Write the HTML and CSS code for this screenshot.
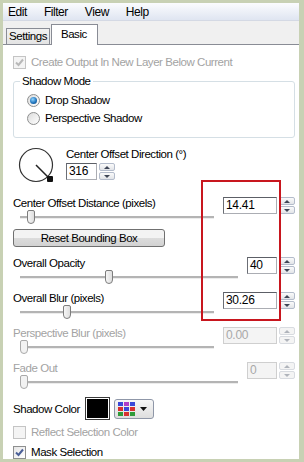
FILE: index.html
```html
<!DOCTYPE html>
<html lang="en">
<head>
    <meta charset="UTF-8">
    <meta name="viewport" content="width=device-width, initial-scale=1.0">
    <title>Drop Shadow - Basic</title>

    <link rel="stylesheet" href="styles.css">

</head>
<body>

    <div class="janela">
        <div class="menu">
            <span>Edit</span><span>Filter</span><span>View</span><span>Help</span>
        </div>

        <div class="abas">
            <div class="aba">Settings</div>
            <div class="aba ativa">Basic</div>
        </div>

        <div class="painel">
            <div class="linha off">
                <span class="chk"><svg viewBox="0 0 11 11"><path d="M2 5.5 L4.5 8 L9 2.5" /></svg></span>
                Create Output In New Layer Below Current
            </div>

            <fieldset class="grupo">
                <legend>Shadow Mode</legend>
                <div class="linha"><span class="radio sel"></span>Drop Shadow</div>
                <div class="linha"><span class="radio"></span>Perspective Shadow</div>
            </fieldset>

            <div class="direcao">
                <svg class="dial" viewBox="0 0 36 36">
                    <circle cx="18" cy="18" r="16.5" />
                    <line x1="18" y1="18" x2="31" y2="31" />
                    <rect x="29" y="29" width="6" height="6" rx="1" />
                </svg>
                <div>
                    <div class="rotulo">Center Offset Direction (°)</div>
                    <div class="spin medio">
                        <span class="campo">316</span>
                        <span class="setas"><i class="up"></i><i class="down"></i></span>
                    </div>
                </div>
            </div>

            <div class="param primeiro">
                <div class="rotulo">Center Offset Distance (pixels)</div>
                <div class="slider"><span class="pino" style="left:7px"></span></div>
                <div class="spin largo">
                    <span class="campo">14.41</span>
                    <span class="setas"><i class="up"></i><i class="down"></i></span>
                </div>
            </div>

            <button class="botao">Reset Bounding Box</button>

            <div class="param opacidade">
                <div class="rotulo">Overall Opacity</div>
                <div class="slider"><span class="pino" style="left:85px"></span></div>
                <div class="spin">
                    <span class="campo">40</span>
                    <span class="setas"><i class="up"></i><i class="down"></i></span>
                </div>
            </div>

            <div class="param">
                <div class="rotulo">Overall Blur (pixels)</div>
                <div class="slider"><span class="pino" style="left:43px"></span></div>
                <div class="spin largo">
                    <span class="campo">30.26</span>
                    <span class="setas"><i class="up"></i><i class="down"></i></span>
                </div>
            </div>

            <div class="param off">
                <div class="rotulo">Perspective Blur (pixels)</div>
                <div class="slider"><span class="pino" style="left:0px"></span></div>
                <div class="spin largo">
                    <span class="campo">0.00</span>
                    <span class="setas"><i class="up"></i><i class="down"></i></span>
                </div>
            </div>

            <div class="param off">
                <div class="rotulo">Fade Out</div>
                <div class="slider"><span class="pino" style="left:0px"></span></div>
                <div class="spin">
                    <span class="campo">0</span>
                    <span class="setas"><i class="up"></i><i class="down"></i></span>
                </div>
            </div>

            <div class="cor">
                <span class="cor-nome">Shadow Color</span>
                <span class="amostra"></span>
                <span class="paleta">
                    <svg class="grade" viewBox="0 0 17 14">
                        <rect x="0" y="0" width="5" height="4" fill="#3a48d8" />
                        <rect x="6" y="0" width="5" height="4" fill="#b03cc8" />
                        <rect x="12" y="0" width="5" height="4" fill="#3a48d8" />
                        <rect x="0" y="5" width="5" height="4" fill="#d83030" />
                        <rect x="6" y="5" width="5" height="4" fill="#3a48d8" />
                        <rect x="12" y="5" width="5" height="4" fill="#d83030" />
                        <rect x="0" y="10" width="5" height="4" fill="#2f9a3a" />
                        <rect x="6" y="10" width="5" height="4" fill="#d83030" />
                        <rect x="12" y="10" width="5" height="4" fill="#2f9a3a" />
                    </svg>
                    <svg class="tri" viewBox="0 0 7 4"><path d="M0 0 H7 L3.5 4 Z" /></svg>
                </span>
            </div>

            <div class="linha off reflexo">
                <span class="chk"></span>
                Reflect Selection Color
            </div>

            <div class="linha mascara">
                <span class="chk"><svg viewBox="0 0 11 11"><path d="M2 5.5 L4.5 8 L9 2.5" /></svg></span>
                Mask Selection
            </div>
        </div>
    </div>

    <div class="destaque"></div>

</body>
</html>
```

FILE: styles.css
```css
@charset "utf-8";

*{
    box-sizing: border-box;
}
body{
    margin: 0;
    background-color: #c8d1b4;
    font: normal 11.5px "Liberation Sans", Arial, sans-serif;
    letter-spacing: -0.45px;
    color: #000;
    overflow: hidden;
}
.janela{
    margin: 3px 5px 3px 3px;
    height: 456px;
    background: #fff;
    display: flex;
    flex-direction: column;
    overflow: hidden;
}

/* menu */
.menu{
    height: 18px;
    display: flex;
    align-items: center;
    gap: 17px;
    padding-left: 5px;
    font-size: 12px;
    background: linear-gradient(#fbfcfe, #dfe5f1);
    border-bottom: 1px solid #d4d9e4;
}

/* abas */
.abas{
    height: 24px;
    display: flex;
    align-items: flex-end;
    padding-left: 3px;
    background: #f0f0f0;
    border-bottom: 1px solid #898c95;
}
.aba{
    height: 16px;
    padding: 0 2px;
    line-height: 15px;
    border: 1px solid #898c95;
    border-bottom: none;
    background: linear-gradient(#f2f2f2, #e3e3e3);
}
.aba.ativa{
    height: 21px;
    width: 47px;
    margin-bottom: -1px;
    margin-left: 1px;
    padding-left: 9px;
    line-height: 18px;
    background: #fff;
}

.painel{
    flex: 1;
    padding: 0 4px 0 10px;
}
.linha{
    height: 14px;
    display: flex;
    align-items: center;
    gap: 5px;
    white-space: nowrap;
}
.off{
    color: #a3a3a3;
}
.painel > .linha.off:first-child{
    margin-top: 10px;
}

/* checkbox e radio */
.chk{
    width: 13px;
    height: 13px;
    border: 1px solid #8e8f8f;
    background: linear-gradient(135deg, #e6e6e6, #fff);
    display: inline-flex;
    align-items: center;
    justify-content: center;
}
.chk svg{
    width: 11px;
    height: 11px;
}
.chk path{
    fill: none;
    stroke: #4a5f97;
    stroke-width: 2;
}
.off .chk{
    border-color: #c4c4c4;
    background: #f4f4f4;
}
.off .chk path{
    stroke: #b8b8b8;
}
.radio{
    width: 13px;
    height: 13px;
    border-radius: 50%;
    border: 1px solid #8e8f8f;
    background: linear-gradient(135deg, #dcdcdc, #fff);
    position: relative;
}
.radio.sel::after{
    content: "";
    position: absolute;
    left: 2px;
    top: 2px;
    width: 7px;
    height: 7px;
    border-radius: 50%;
    background: radial-gradient(circle at 40% 35%, #8fd4ff, #1b6fb8 60%, #0e3f72);
}

/* grupo */
.grupo{
    margin: 5px 0 0 0;
    padding: 5px 6px 12px 13px;
    border: 1px solid #d5dfe5;
    border-radius: 3px;
}
.grupo legend{
    padding: 0 2px;
    margin-left: -7px;
    line-height: 14px;
}
.grupo .linha + .linha{
    margin-top: 4px;
}

/* direcao */
.direcao{
    margin-top: 9px;
    display: flex;
    gap: 12px;
}
.dial{
    width: 36px;
    height: 36px;
    margin-left: 5px;
}
.dial circle{
    fill: none;
    stroke: #333;
    stroke-width: 1.2;
}
.dial line{
    stroke: #222;
    stroke-width: 1.5;
}
.dial rect{
    fill: #111;
}
.rotulo{
    height: 14px;
    line-height: 14px;
    white-space: nowrap;
}
.direcao .spin{
    margin-top: 2px;
}

/* spin */
.spin{
    display: flex;
    gap: 2px;
    height: 17px;
}
.campo{
    width: 30px;
    height: 17px;
    padding-left: 2px;
    line-height: 15px;
    font-size: 12px;
    letter-spacing: -0.3px;
    border: 1px solid #abadb3;
    border-top-color: #5c5f66;
    border-left-color: #6b6e75;
    background: #fff;
    color: #000;
}
.medio .campo{
    width: 31px;
}
.largo .campo{
    width: 54px;
}
.setas{
    width: 16px;
    display: flex;
    flex-direction: column;
    gap: 1px;
}
.setas i{
    flex: 1;
    border: 1px solid #b4bccb;
    border-radius: 2px;
    background: linear-gradient(#fbfbfb, #e2e4e8);
    display: flex;
    align-items: center;
    justify-content: center;
}
.setas i::after{
    content: "";
    border-left: 3px solid transparent;
    border-right: 3px solid transparent;
}
.setas .up::after{
    border-bottom: 3px solid #3f4656;
}
.setas .down::after{
    border-top: 3px solid #3f4656;
}
.off .campo{
    background: #f4f4f4;
    color: #a8a8a8;
    border-color: #cfcfcf;
}
.off .setas i{
    border-color: #d8dbe0;
    background: #f4f4f4;
}
.off .setas .up::after{
    border-bottom-color: #b0b4bb;
}
.off .setas .down::after{
    border-top-color: #b0b4bb;
}

/* parametros com slider */
.param{
    display: grid;
    grid-template-columns: 1fr auto;
    grid-template-rows: 14px 14px;
    column-gap: 9px;
    margin-top: 7px;
}
.param.primeiro{
    margin-top: 13px;
}
.param.opacidade{
    margin-top: 9px;
}
.param .spin{
    grid-column: 2;
    grid-row: 1 / 3;
    margin-top: 1px;
}
.slider{
    grid-column: 1;
    grid-row: 2;
    margin-left: 7px;
    position: relative;
}
.slider::before{
    content: "";
    position: absolute;
    left: 0;
    right: 0;
    top: 6px;
    height: 2px;
    background: #b4b4b4;
    border-bottom: 1px solid #ececec;
}
.pino{
    position: absolute;
    top: 0;
    width: 8px;
    height: 14px;
    border: 1px solid #7d7d7d;
    border-radius: 2px 2px 4px 4px;
    background: linear-gradient(90deg, #f6f6f6, #dedede);
}
.off .pino{
    border-color: #a9a9a9;
    background: #f2f2f2;
}

/* botao */
.botao{
    display: block;
    margin-top: 5px;
    width: 152px;
    height: 18px;
    padding: 0;
    font: inherit;
    letter-spacing: inherit;
    color: #000;
    border: 1px solid #707070;
    border-radius: 3px;
    background: linear-gradient(#f3f3f3 50%, #dcdcdc 50%, #d2d2d2);
}

/* cor */
.cor{
    margin-top: 8px;
    height: 23px;
    display: flex;
    align-items: center;
}
.cor-nome{
    width: 72px;
    white-space: nowrap;
}
.amostra{
    width: 25px;
    height: 23px;
    border: 1px solid #3a3a3a;
    box-shadow: inset 0 0 0 1px #fff;
    background: #000;
}
.paleta{
    margin-left: 4px;
    width: 40px;
    height: 20px;
    border: 1px solid #8f97a8;
    border-radius: 3px;
    background: linear-gradient(#f7f7f7, #dedede);
    display: flex;
    align-items: center;
    gap: 5px;
    padding-left: 3px;
}
.grade{
    width: 17px;
    height: 14px;
}
.tri{
    width: 7px;
    height: 4px;
}
.tri path{
    fill: #111;
}

.reflexo{
    margin-top: 5px;
}
.mascara{
    margin-top: 6px;
}

/* marcacao vermelha por cima da captura */
.destaque{
    position: absolute;
    left: 201px;
    top: 180px;
    width: 80px;
    height: 141px;
    border: 2px solid #c8161e;
}
```
